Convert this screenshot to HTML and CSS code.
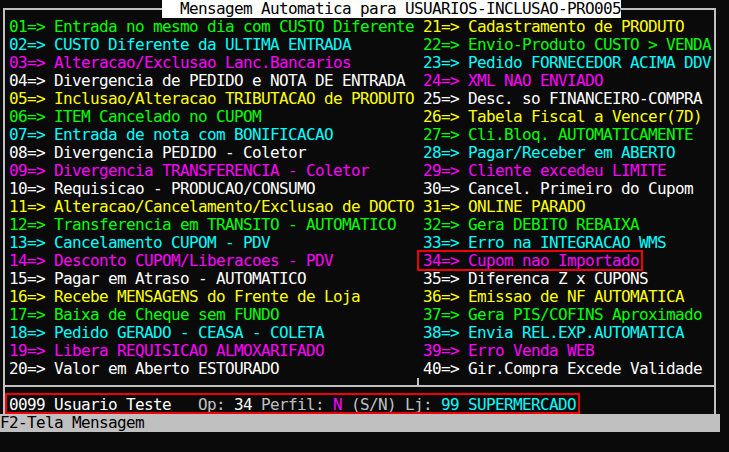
FILE: index.html
```html
<!DOCTYPE html>
<html lang="pt">
<head>
<meta charset="utf-8">
<title>Mensagem Automatica</title>
<link rel="stylesheet" href="styles.css">
</head>
<body>
<div class="screen">
  <div class="window">
    <div class="title">  Mensagem Automatica para USUARIOS-INCLUSAO-PRO005</div>
    <div class="menu">
      <div class="col">
        <div class="row g">01=> Entrada no mesmo dia com CUSTO Diferente</div>
        <div class="row c">02=> CUSTO Diferente da ULTIMA ENTRADA</div>
        <div class="row m">03=> Alteracao/Exclusao Lanc.Bancarios</div>
        <div class="row w">04=> Divergencia de PEDIDO e NOTA DE ENTRADA</div>
        <div class="row y">05=> Inclusao/Alteracao TRIBUTACAO de PRODUTO</div>
        <div class="row g">06=> ITEM Cancelado no CUPOM</div>
        <div class="row c">07=> Entrada de nota com BONIFICACAO</div>
        <div class="row w">08=> Divergencia PEDIDO - Coletor</div>
        <div class="row m">09=> Divergencia TRANSFERENCIA - Coletor</div>
        <div class="row w">10=> Requisicao - PRODUCAO/CONSUMO</div>
        <div class="row y">11=> Alteracao/Cancelamento/Exclusao de DOCTO</div>
        <div class="row g">12=> Transferencia em TRANSITO - AUTOMATICO</div>
        <div class="row c">13=> Cancelamento CUPOM - PDV</div>
        <div class="row m">14=> Desconto CUPOM/Liberacoes - PDV</div>
        <div class="row w">15=> Pagar em Atraso - AUTOMATICO</div>
        <div class="row y">16=> Recebe MENSAGENS do Frente de Loja</div>
        <div class="row g">17=> Baixa de Cheque sem FUNDO</div>
        <div class="row c">18=> Pedido GERADO - CEASA - COLETA</div>
        <div class="row m">19=> Libera REQUISICAO ALMOXARIFADO</div>
        <div class="row w">20=> Valor em Aberto ESTOURADO</div>
      </div>
      <div class="col">
        <div class="row y">21=> Cadastramento de PRODUTO</div>
        <div class="row g">22=> Envio-Produto CUSTO &gt; VENDA</div>
        <div class="row c">23=> Pedido FORNECEDOR ACIMA DDV</div>
        <div class="row m">24=> XML NAO ENVIADO</div>
        <div class="row w">25=> Desc. so FINANCEIRO-COMPRA</div>
        <div class="row y">26=> Tabela Fiscal a Vencer(7D)</div>
        <div class="row g">27=> Cli.Bloq. AUTOMATICAMENTE</div>
        <div class="row c">28=> Pagar/Receber em ABERTO</div>
        <div class="row m">29=> Cliente excedeu LIMITE</div>
        <div class="row w">30=> Cancel. Primeiro do Cupom</div>
        <div class="row y">31=> ONLINE PARADO</div>
        <div class="row g">32=> Gera DEBITO REBAIXA</div>
        <div class="row c">33=> Erro na INTEGRACAO WMS</div>
        <div class="row m"><span class="mark mark-item">34=> Cupom nao Importado</span></div>
        <div class="row w">35=> Diferenca Z x CUPONS</div>
        <div class="row y">36=> Emissao de NF AUTOMATICA</div>
        <div class="row g">37=> Gera PIS/COFINS Aproximado</div>
        <div class="row c">38=> Envia REL.EXP.AUTOMATICA</div>
        <div class="row m">39=> Erro Venda WEB</div>
        <div class="row w">40=> Gir.Compra Excede Validade</div>
      </div>
    </div>
    <div class="sep"></div>
    <div class="row status"><span class="mark mark-status"><span class="w">0099 Usuario Teste</span><span class="gr">   Op: </span><span class="w">34</span><span class="gr"> Perfil: </span><span class="m">N</span><span class="gr"> (S/N) Lj: </span><span class="c">99 SUPERMERCADO</span></span></div>
  </div>
  <div class="fbar">F2-Tela Mensagem</div>
</div>
</body>
</html>
```

FILE: styles.css
```css
html, body {
  margin: 0;
  padding: 0;
  background: #0a0a0a;
}

.screen {
  width: 729px;
  height: 452px;
  overflow: hidden;
  background: #0a0a0a;
  font-family: "DejaVu Sans Mono", "Liberation Mono", monospace;
  font-size: 16px;
  letter-spacing: -0.633px;
  line-height: 18px;
  color: #ffffff;
  padding-top: 1px;
  box-sizing: border-box;
}

.window {
  position: relative;
  box-sizing: border-box;
  width: 713px;
  height: 406px;
  margin: 7px 0 0 3px;
  padding: 8px 0 0 4px;
  border: 2px solid #c0c0c0;
  border-bottom: none;
}

.title {
  position: absolute;
  top: -10px;
  left: 157px;
  width: 459px;
  height: 18px;
  background: #ffffff;
  color: #000000;
  white-space: pre;
}

.menu {
  display: grid;
  grid-template-columns: 414px 1fr;
}

.col {
  display: flex;
  flex-direction: column;
}

.row {
  height: 18px;
  white-space: pre;
}

.sep {
  height: 18px;
  margin-left: -4px;
  background:
    linear-gradient(#c0c0c0, #c0c0c0) 0 7px / 100% 2px no-repeat,
    linear-gradient(#c0c0c0, #c0c0c0) 412px 0 / 2px 8px no-repeat;
}

.mark {
  position: relative;
  display: inline-block;
  white-space: pre;
}

.mark::after {
  content: "";
  position: absolute;
  border: 2px solid #f00000;
}

.mark-item::after {
  left: -6px;
  right: -4px;
  top: -2px;
  bottom: -1px;
}

.mark-status::after {
  left: -4px;
  right: -4px;
  top: -3px;
  bottom: 0;
}

.fbar {
  width: 720px;
  height: 18px;
  background: #c0c0c0;
  color: #000000;
  white-space: pre;
}

.g { color: #00ff00; }
.c { color: #00ffff; }
.m { color: #ff00ff; }
.w { color: #ffffff; }
.y { color: #ffff00; }
.gr { color: #c0c0c0; }
```
